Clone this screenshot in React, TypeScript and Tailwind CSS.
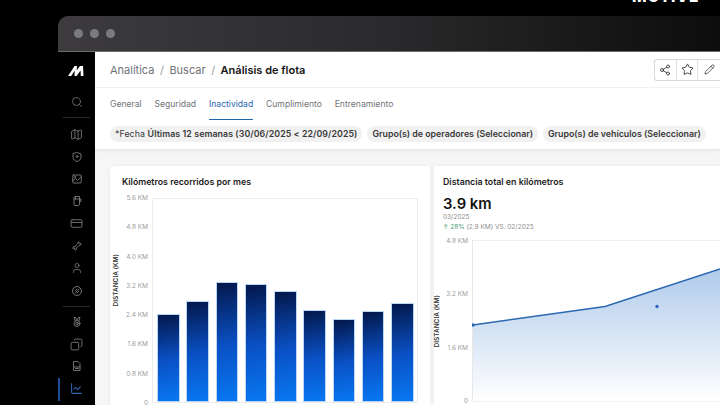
import { Search, Map, CreditCard, User, Copy, Share2, Star, Pencil, ChartLine } from "lucide-react";

const bars = [88, 101, 120, 118, 111, 92, 83, 91, 99];
const leftTicks = ["5.6 KM", "4.8 KM", "4.0 KM", "3.2 KM", "2.4 KM", "1.6 KM", "0.8 KM", "0"];
const rightTicks = ["4.8 KM", "3.2 KM", "1.6 KM", "0"];

function Icon({ children, className = "" }: { children: React.ReactNode; className?: string }) {
  return (
    <svg width="12" height="12" viewBox="0 0 24 24" fill="none" stroke="currentColor" strokeWidth="1.8" strokeLinecap="round" strokeLinejoin="round" className={className}>
      {children}
    </svg>
  );
}

function Sidebar() {
  const cell = "h-[22.3px] flex items-center justify-center shrink-0";
  return (
    <aside className="relative w-[37px] shrink-0 bg-black text-[#7d7d7d] flex flex-col items-center pt-[13px]">
      <svg width="16" height="11" viewBox="0 0 16 11" className="shrink-0 -ml-[2px]">
        <path d="M0 11 L4 5 L6.5 1 L9 1 L8.6 5.5 L12 1 L15 1 L15.5 11 L12.8 11 L12.6 5.5 L8.6 11 L6.5 11 L6.7 5.5 L3.2 11 Z" fill="#fff" />
      </svg>
      <div className={`${cell} mt-[15px]`}><Search size={12} strokeWidth={1.6} /></div>
      <div className="w-[27px] h-px bg-[#2b2b2b] mt-[4px] mb-[5px] shrink-0" />
      <div className={cell}><Map size={13} strokeWidth={1.6} /></div>
      <div className={cell}>
        <Icon><path d="M12 3 L20 6 V12 C20 17 16 20 12 21 C8 20 4 17 4 12 V6 Z" /><circle cx="12" cy="11" r="1.8" /></Icon>
      </div>
      <div className={cell}>
        <Icon><rect x="3.5" y="4" width="17" height="16" rx="1.5" /><path d="M3.5 15 L9 11 L13 15 L20 8" /><circle cx="8" cy="8" r="1" /></Icon>
      </div>
      <div className={cell}>
        <Icon><path d="M6 6 C6 4 7 3 9 3 H17 V19 C17 20 16 21 15 21 H8 C7 21 6 20 6 19 Z" /><path d="M6 8 H20 V13 H17" /><path d="M9 8 V3" /></Icon>
      </div>
      <div className={cell}><CreditCard size={13} strokeWidth={1.6} /></div>
      <div className={cell}>
        <Icon><path d="M8 13 L13 8 C12.5 5.5 14 3.5 16 4 L15.5 6.5 L17.8 8 L20 7 C20.5 9.5 18.5 11.5 16 11 L11 16 C11.5 18.5 10 20.5 7.5 20 L8 17.5 L6 16 L3.5 17 C3.5 14.5 5.5 12.5 8 13 Z" /></Icon>
      </div>
      <div className={cell}><User size={12} strokeWidth={1.6} /></div>
      <div className={cell}>
        <Icon><circle cx="12" cy="12" r="9" /><path d="M8 16 L16 8" /><path d="M9 11 L12 8" /><path d="M12 16 L16 12" /></Icon>
      </div>
      <div className="w-[27px] h-px bg-[#2b2b2b] my-[4px] shrink-0" />
      <div className={cell}>
        <Icon><circle cx="12" cy="15" r="6" /><circle cx="12" cy="15" r="2.5" /><path d="M8 9 L6 3 H9 L12 8 L15 3 H18 L16 9" /></Icon>
      </div>
      <div className={cell}><Copy size={13} strokeWidth={1.6} className="-scale-x-100" /></div>
      <div className={cell}>
        <Icon><path d="M6 3 H14 L18 7 V21 H6 Z" /><path d="M6 14 H18" /><path d="M9 17 H15" /></Icon>
      </div>
      <div className={`${cell} text-[#2f66b0]`}><ChartLine size={13} strokeWidth={2} /></div>
      <div className="absolute left-0 top-[326px] w-[2px] h-[23px] bg-[#1f4f96]" />
    </aside>
  );
}

function Header() {
  return (
    <header className="bg-white shadow-[0_1px_4px_rgba(0,0,0,0.1)] shrink-0 relative">
      <div className="h-[36px] flex items-center pl-[15px] border-b border-[#f1f1f1]">
        <div className="flex items-center text-[11px] text-[#6f7378] pt-[2px]">
          <span>Analítica</span>
          <span className="mx-[5.5px] text-[#9a9ea3]">/</span>
          <span>Buscar</span>
          <span className="mx-[5.5px] text-[#9a9ea3]">/</span>
          <span className="font-semibold text-[#151515]">Análisis de flota</span>
        </div>
        <div className="ml-auto flex h-[22px] border border-[#d9d9d9] border-r-0 rounded-l-[3px] text-[#2b2b2b] w-[66px] shrink-0">
          <div className="w-[22px] flex items-center justify-center border-r border-[#e0e0e0]"><Share2 size={12} strokeWidth={1.6} /></div>
          <div className="w-[22px] flex items-center justify-center border-r border-[#e0e0e0]"><Star size={13} strokeWidth={1.6} /></div>
          <div className="w-[22px] flex items-center justify-center"><Pencil size={11} strokeWidth={1.6} /></div>
        </div>
      </div>
      <nav className="flex h-[32px] pl-[15px] gap-[12.8px] text-[8.6px] text-[#6f7378]">
        <span className="pt-[9.5px]">General</span>
        <span className="pt-[9.5px]">Seguridad</span>
        <span className="pt-[9.5px] text-[#1f66ad] border-b border-[#1f66ad]">Inactividad</span>
        <span className="pt-[9.5px]">Cumplimiento</span>
        <span className="pt-[9.5px]">Entrenamiento</span>
      </nav>
      <div className="flex gap-[5px] pl-[15px] pt-[6px] pb-[7px] text-[8.8px] font-semibold text-[#3a3a3a] whitespace-nowrap">
        <span className="bg-[#f1f1f1] rounded-full px-[5px] h-[16px] leading-[16px] tracking-[0.08px]"><span className="font-normal">*Fecha </span>Últimas 12 semanas (30/06/2025 &lt; 22/09/2025)</span>
        <span className="bg-[#f1f1f1] rounded-full px-[5px] h-[16px] leading-[16px]">Grupo(s) de operadores (Seleccionar)</span>
        <span className="bg-[#f1f1f1] rounded-full px-[5px] h-[16px] leading-[16px]">Grupo(s) de vehículos (Seleccionar)</span>
      </div>
    </header>
  );
}

function AxisTitle({ className }: { className: string }) {
  return (
    <span className={`absolute [writing-mode:vertical-rl] rotate-180 text-[6.5px] leading-[8px] font-semibold text-[#333] whitespace-nowrap ${className}`}>
      DISTANCIA (KM)
    </span>
  );
}

function BarCard() {
  return (
    <section className="w-[320px] shrink-0 bg-white rounded-tl-[3px] shadow-[0_0_3px_rgba(0,0,0,0.08)] flex flex-col px-[12px]">
      <h2 className="text-[8.8px] font-semibold text-[#1c1c1c] h-[16px] leading-[16px] mt-[8px] mb-[8px]">Kilómetros recorridos por mes</h2>
      <div className="flex flex-1 min-h-0">
        <div className="relative w-[30px] shrink-0">
          <AxisTitle className="left-[-10px] top-[56px]" />
          <div className="absolute right-[4px] top-[-4px] h-[213px] flex flex-col justify-between items-end text-[6.5px] text-[#9b9b9b] leading-[8px] whitespace-nowrap">
            {leftTicks.map((t) => <span key={t}>{t}</span>)}
          </div>
        </div>
        <div className="w-[266px] shrink-0 h-[205px] border border-[#ececec] flex items-end gap-[6.75px] pl-[4px]">
          {bars.map((h, i) => (
            <div key={i} style={{ height: h }} className="w-[22.5px] shrink-0 bg-linear-[168deg,#03174a,#0a50c4_52%,#0878f2] border border-[#b9d6f5]" />
          ))}
        </div>
      </div>
    </section>
  );
}

function LineCard() {
  return (
    <section className="flex-1 min-w-0 bg-white shadow-[0_0_3px_rgba(0,0,0,0.08)] pl-[9px] flex flex-col">
      <h2 className="text-[8.8px] font-semibold text-[#1c1c1c] h-[16px] leading-[16px] mt-[8px]">Distancia total en kilómetros</h2>
      <div className="text-[14.8px] font-semibold text-[#111] leading-[20px] mt-[4px]">3.9 km</div>
      <div className="text-[6.5px] text-[#8c8c8c] leading-[9px] mt-[-1px]">03/2025</div>
      <div className="text-[6.5px] text-[#8c8c8c] leading-[9px] mt-[1px] whitespace-nowrap"><span className="text-[#3f9a6a]">↑ 28%</span> (2.9 KM) VS. 02/2025</div>
      <div className="flex mt-[8px]">
        <div className="relative w-[29px] shrink-0">
          <AxisTitle className="left-[-10px] top-[55px]" />
          <div className="absolute right-[4px] top-[-3px] h-[168px] flex flex-col justify-between items-end text-[6.5px] text-[#9b9b9b] leading-[8px] whitespace-nowrap">
            {rightTicks.map((t) => <span key={t}>{t}</span>)}
          </div>
        </div>
        <svg width="248" height="162" viewBox="0 0 248 162" className="shrink-0">
          <defs>
            <linearGradient id="areaFill" x1="0" y1="0" x2="0" y2="1">
              <stop offset="0" stopColor="#b0cbeb" />
              <stop offset="1" stopColor="#ffffff" />
            </linearGradient>
          </defs>
          <path d="M0.5 0 V161 H248" fill="none" stroke="#e8e8e8" />
          <path d="M0.5 0.5 H248" fill="none" stroke="#f0f0f0" />
          <path d="M1 85 L133 66.5 L248 29 V161 H1 Z" fill="url(#areaFill)" />
          <path d="M1 85 L133 66.5 L248 29" fill="none" stroke="#2a68b2" strokeWidth="1.5" />
          <circle cx="1" cy="85" r="1.7" fill="#2a68b2" />
          <circle cx="185" cy="66.5" r="1.7" fill="#2a68b2" />
        </svg>
      </div>
    </section>
  );
}

export default function App() {
  return (
    <div className="relative w-[720px] h-[405px] overflow-hidden bg-black pl-[58px] pt-[16px] font-['Inter',sans-serif]">
      <span className="absolute left-[632px] top-[-10px] text-[15.5px] leading-[14px] font-extrabold tracking-[0.8px] text-white">MOTIVE</span>
      <div className="w-[662px] h-[389px] flex flex-col overflow-hidden rounded-tl-[10px]">
        <div className="h-[36px] shrink-0 bg-linear-to-r from-[#3d3b3e] via-[#2a292b] to-[#0d0d0e] flex items-center gap-[7.3px] pl-[15.5px] border-b border-[#6b6b6b]">
          <span className="w-[9px] h-[9px] rounded-full bg-[#7b7b7e]" />
          <span className="w-[9px] h-[9px] rounded-full bg-[#7b7b7e]" />
          <span className="w-[9px] h-[9px] rounded-full bg-[#7b7b7e]" />
        </div>
        <div className="flex flex-1 min-h-0">
          <Sidebar />
          <main className="flex-1 min-w-0 bg-[#f6f6f6] flex flex-col overflow-hidden">
            <Header />
            <div className="flex gap-[4px] pl-[15px] pt-[17px] flex-1 min-h-0">
              <BarCard />
              <LineCard />
            </div>
          </main>
        </div>
      </div>
    </div>
  );
}
